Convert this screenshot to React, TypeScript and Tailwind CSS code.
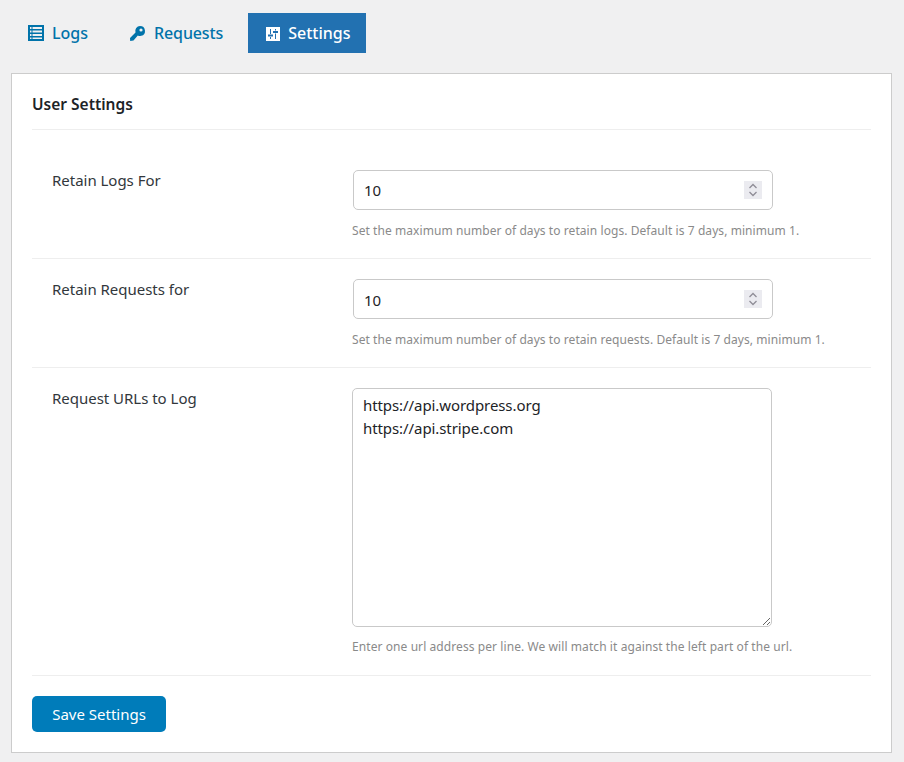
import React from "react";

const font = { fontFamily: '"Noto Sans", sans-serif' };

function ListIcon() {
  return (
    <svg width="16" height="16" viewBox="0 0 16 16" className="mr-2 shrink-0">
      <path fill="#0073aa" fillRule="evenodd" d="M0 0h16v16H0z M2 2v2h1.5V2z M4.5 2v2H14V2z M2 5.5v2h1.5v-2z M4.5 5.5v2H14v-2z M2 9v2h1.5V9z M4.5 9v2H14V9z M2 12.5V14h1.5v-1.5z M4.5 12.5V14H14v-1.5z" />
    </svg>
  );
}
function KeyIcon() {
  return (
    <svg width="17" height="17" viewBox="0 0 17 17" className="mr-2 shrink-0">
      <path fill="#0073aa" fillRule="evenodd" d="M11 1a5 5 0 0 1 1.2 9.85 5 5 0 0 1-3.4-.4L4.5 15.5 1.2 16 1 13l5.5-5.6A5 5 0 0 1 11 1z M12 3.4a1.6 1.6 0 1 0 0 3.2 1.6 1.6 0 0 0 0-3.2z" />
    </svg>
  );
}
function SettingsIcon() {
  return (
    <svg width="14" height="14" viewBox="0 0 14 14" className="mr-2 mt-[2px] shrink-0">
      <path fill="#ffffff" d="M0 0h14v14H0z" />
      <path fill="#2271b1" d="M4 2h1v5h-1z M4 10h1v2h-1z M2 7.5h5V9.5H2z M9 2h1v1.5H9z M9 6.5h1V12H9z M7 4h5v2H7z" />
    </svg>
  );
}

function Spinner() {
  return (
    <div className="mr-[10px] flex h-[18px] w-[18px] shrink-0 flex-col items-center justify-center gap-[2px] bg-[#ebebf0]">
      <svg width="10" height="6" viewBox="0 0 10 6"><path d="M1.5 5l3.5-3.5L8.5 5" fill="none" stroke="#8f8d97" strokeWidth="1.3" /></svg>
      <svg width="10" height="6" viewBox="0 0 10 6"><path d="M1.5 1L5 4.5 8.5 1" fill="none" stroke="#8f8d97" strokeWidth="1.3" /></svg>
    </div>
  );
}

function NumberRow({ label, help, border, valueClass }: { label: string; help: string; border: string; valueClass: string }) {
  return (
    <div className={`flex border-b border-[#eeeeee] ${border}`}>
      <div className="-mt-px w-[320px] shrink-0 pl-5 text-[15px] leading-[22px] tracking-[-0.02px] text-[#32373c]">{label}</div>
      <div className="flex-1">
        <div className="ml-px flex h-10 w-[420px] items-center rounded-[5px] border border-[#c9c9c9] bg-white pl-[10px]">
          <span className={`flex-1 text-[15px] text-[#1d2327] ${valueClass}`}>10</span>
          <Spinner />
        </div>
        <p className="mt-[11px] text-[12px] leading-[19px] tracking-[0.07px] text-[#8a8a8a]">{help}</p>
      </div>
    </div>
  );
}

export default function App() {
  return (
    <div className="min-h-[762px] bg-[#f0f0f1] px-[11px] pt-[13px]" style={font}>
      <nav className="flex h-10 items-center">
        <a className="flex h-10 items-center pl-[17px] pr-[41px] text-[16px] font-medium text-[#0073aa]"><ListIcon />Logs</a>
        <a className="flex h-10 items-center pr-[25px] text-[16px] font-medium tracking-[-0.12px] text-[#0073aa]"><KeyIcon />Requests</a>
        <a className="flex h-10 w-[118px] items-center bg-[#2271b1] pl-[18px] text-[16px] font-medium text-white"><SettingsIcon />Settings</a>
      </nav>
      <section className="mt-5 h-[680px] w-[881px] border border-[#cccccc] bg-white px-5">
        <h2 className="flex h-[56px] items-center border-b border-[#eeeeee] pt-[7px] text-[15.5px] font-semibold text-[#1d2327]">User Settings</h2>
        <NumberRow label="Retain Logs For" help="Set the maximum number of days to retain logs. Default is 7 days, minimum 1." border="h-[129px] pt-10" valueClass="" />
        <NumberRow label="Retain Requests for" help="Set the maximum number of days to retain requests. Default is 7 days, minimum 1." border="h-[109px] pt-5" valueClass="pt-[2px]" />
        <div className="flex h-[308px] border-b border-[#eeeeee] pt-5">
          <div className="-mt-px w-[320px] shrink-0 pl-5 text-[15px] leading-[22px] tracking-[-0.02px] text-[#32373c]">Request URLs to Log</div>
          <div className="flex-1">
            <textarea
              readOnly
              defaultValue={"https://api.wordpress.org\nhttps://api.stripe.com"}
              className="block h-[239px] w-[420px] rounded-[5px] border border-[#c9c9c9] bg-white px-[10px] pt-[5px] pb-[6px] text-[15px] leading-[23px] tracking-[-0.08px] text-[#1d2327] outline-none"
            />
            <p className="mt-[10px] text-[12px] leading-[19px] tracking-[0.08px] text-[#8a8a8a]">Enter one url address per line. We will match it against the left part of the url.</p>
          </div>
        </div>
        <button className="mt-5 h-9 w-[134px] rounded-[5px] bg-[#007cba] text-[15px] text-white">Save Settings</button>
      </section>
    </div>
  );
}
